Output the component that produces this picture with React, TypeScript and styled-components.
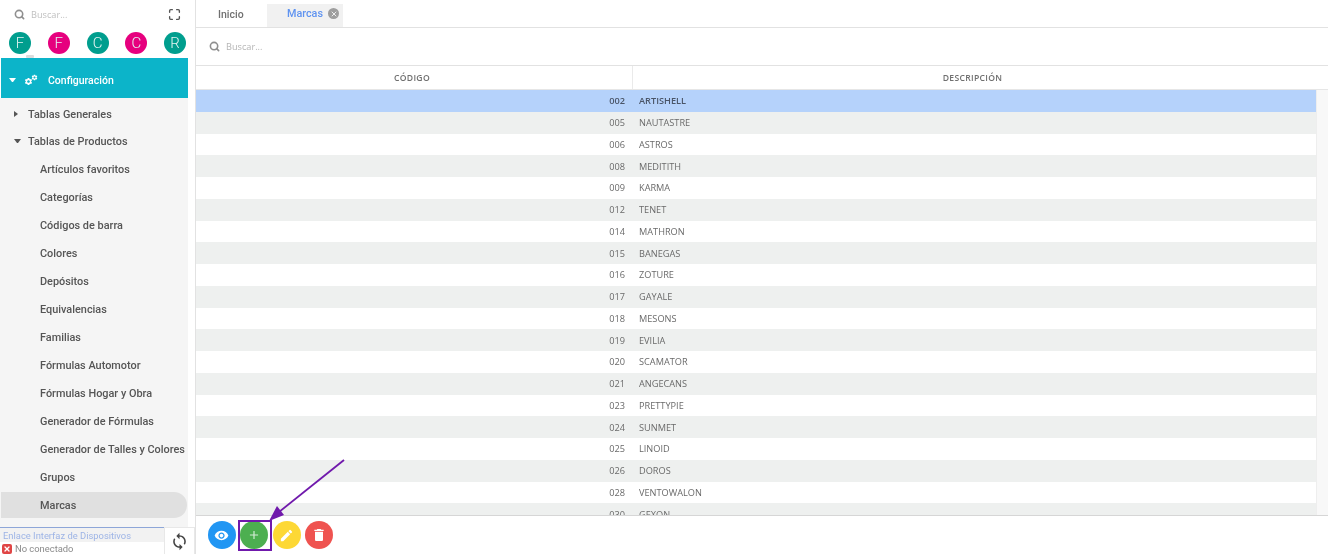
import React from 'react';
import styled, { createGlobalStyle } from 'styled-components';
import { Search, Maximize, X } from 'lucide-react';
import { MdVisibility, MdAdd, MdEdit, MdDelete, MdSync, MdSettings } from 'react-icons/md';

const GlobalStyle = createGlobalStyle`
  html, body { margin: 0; padding: 0; background: #fff; overflow: hidden; }
  * { box-sizing: border-box; }
`;

const avatars = [
  { letter: 'F', color: '#009e8e' },
  { letter: 'F', color: '#e6007e' },
  { letter: 'C', color: '#009e8e' },
  { letter: 'C', color: '#e6007e' },
  { letter: 'R', color: '#009e8e' },
];

const menuItems = [
  'Artículos favoritos',
  'Categorías',
  'Códigos de barra',
  'Colores',
  'Depósitos',
  'Equivalencias',
  'Familias',
  'Fórmulas Automotor',
  'Fórmulas Hogar y Obra',
  'Generador de Fórmulas',
  'Generador de Talles y Colores',
  'Grupos',
  'Marcas',
];

const brands = [
  ['002', 'ARTISHELL'],
  ['005', 'NAUTASTRE'],
  ['006', 'ASTROS'],
  ['008', 'MEDITITH'],
  ['009', 'KARMA'],
  ['012', 'TENET'],
  ['014', 'MATHRON'],
  ['015', 'BANEGAS'],
  ['016', 'ZOTURE'],
  ['017', 'GAYALE'],
  ['018', 'MESONS'],
  ['019', 'EVILIA'],
  ['020', 'SCAMATOR'],
  ['021', 'ANGECANS'],
  ['023', 'PRETTYPIE'],
  ['024', 'SUNMET'],
  ['025', 'LINOID'],
  ['026', 'DOROS'],
  ['028', 'VENTOWALON'],
  ['030', 'GEXON'],
];

const Page = styled.div`
  position: relative;
  width: 1337px;
  height: 554px;
  display: flex;
  overflow: hidden;
  background: #fff;
  font-family: Roboto, sans-serif;
  filter: blur(0.5px);
`;

const Sidebar = styled.aside`
  width: 196px;
  height: 554px;
  flex-shrink: 0;
  display: flex;
  flex-direction: column;
  border-right: 1px solid #e2e2e2;
  background: #fff;
`;

const SideSearch = styled.div`
  height: 29px;
  display: flex;
  align-items: center;
  padding: 0 14px 0 14px;
  gap: 6px;
  color: #8f8f8f;
`;

const SideSearchText = styled.span`
  flex: 1;
  color: #c0c0c0;
  font-family: 'Open Sans', sans-serif;
  font-size: 9.2px;
`;

const Avatars = styled.div`
  height: 28px;
  display: flex;
  justify-content: space-between;
  align-items: center;
  padding: 0 9px 0 9px;
`;

const Avatar = styled.div<{ $color: string }>`
  width: 22px;
  height: 22px;
  border-radius: 50%;
  background: ${(p) => p.$color};
  color: #e4f4f2;
  font-size: 15px;
  font-weight: 300;
  display: flex;
  align-items: center;
  justify-content: center;
`;

const ClippedIcon = styled.div`
  position: absolute;
  left: 26px;
  top: 55px;
  width: 8px;
  height: 3px;
  border-radius: 1px;
  background: #dcdcdc;
`;

const ActiveSection = styled.div`
  height: 40px;
  margin: 1px 7px 0 1px;
  padding: 4px 0 0 8px;
  background: #0cb4c9;
  color: #fff;
  display: flex;
  align-items: center;
  font-size: 10.5px;
  font-weight: 500;
`;

const Caret = styled.span<{ $open?: boolean; $dark?: boolean }>`
  width: 7px;
  height: 0;
  flex-shrink: 0;
  ${(p) =>
    p.$open
      ? `border-left: 3.5px solid transparent; border-right: 3.5px solid transparent; border-top: 4px solid ${p.$dark ? '#555' : '#fff'};`
      : `border-top: 3.5px solid transparent; border-bottom: 3.5px solid transparent; border-left: 4px solid ${p.$dark ? '#555' : '#fff'}; border-right: 3px solid transparent;`}
`;

const Gears = styled.span`
  width: 12px;
  height: 12px;
  margin: 0 12px 0 8px;
  display: flex;
  align-items: flex-start;
`;

const BigGear = styled(MdSettings)`
  width: 9px;
  height: 9px;
  margin-top: 3px;
  flex-shrink: 0;
`;

const SmallGear = styled(MdSettings)`
  width: 7px;
  height: 7px;
  margin-left: -2px;
  flex-shrink: 0;
`;

const Menu = styled.div`
  flex: 1;
  min-height: 0;
  margin-right: 7px;
  padding-top: 2.5px;
  background: #f5f5f5;
  overflow: hidden;
  display: flex;
  flex-direction: column;
`;

const GroupRow = styled.div`
  height: 27.25px;
  flex-shrink: 0;
  display: flex;
  align-items: center;
  gap: 7px;
  padding-left: 14px;
  color: #555;
  font-size: 10.9px;
  font-weight: 500;
`;

const MenuItem = styled.div<{ $active?: boolean }>`
  height: 26px;
  margin: 1px 1px 1px 1px;
  flex-shrink: 0;
  display: flex;
  align-items: center;
  padding-left: 39px;
  color: #555;
  font-size: 10.9px;
  font-weight: 500;
  white-space: nowrap;
  border-radius: 0 13px 13px 0;
  background: ${(p) => (p.$active ? '#e0e0e0' : 'transparent')};
`;

const Status = styled.div`
  height: 27px;
  flex-shrink: 0;
  display: flex;
  background: #fff;
`;

const StatusInfo = styled.div`
  flex: 1;
  min-width: 0;
  font-size: 9.4px;
  white-space: nowrap;
  overflow: hidden;
`;

const StatusTitle = styled.div`
  height: 15px;
  padding-left: 3px;
  display: flex;
  align-items: center;
  color: #9db4e6;
  background: #f2f2f2;
  border-top: 1px solid #8da6d8;
`;

const StatusLine = styled.div`
  display: flex;
  align-items: center;
  gap: 3px;
  padding: 1px 0 0 2px;
  color: #8a8a8a;
`;

const ErrorMark = styled.span`
  width: 10px;
  height: 10px;
  border-radius: 2px;
  background: #e04545;
  color: #fff;
  display: flex;
  align-items: center;
  justify-content: center;
`;

const RefreshButton = styled.div`
  width: 31px;
  height: 27px;
  display: flex;
  align-items: center;
  justify-content: center;
  border: 1px solid #e8e8e8;
  border-bottom: none;
  color: #444;
`;

const Main = styled.main`
  width: 1132px;
  flex-shrink: 0;
  display: flex;
  flex-direction: column;
`;

const Tabs = styled.div`
  height: 28px;
  display: flex;
  border-bottom: 1px solid #e2e2e2;
`;

const InactiveTab = styled.div`
  width: 71px;
  padding: 8px 0 0 22px;
  color: #707070;
  font-size: 10.5px;
  font-weight: 500;
`;

const ActiveTab = styled.div`
  width: 76px;
  height: 23px;
  margin-top: 4px;
  padding: 3px 0 0 20px;
  display: flex;
  gap: 5px;
  color: #5f93f0;
  background: #f1f1f1;
  font-size: 10.8px;
  font-weight: 500;
`;

const TabClose = styled.span`
  width: 11px;
  height: 11px;
  margin-top: 1px;
  border-radius: 50%;
  background: #9e9e9e;
  color: #eee;
  display: flex;
  align-items: center;
  justify-content: center;
`;

const SearchBar = styled.div`
  height: 38px;
  display: flex;
  align-items: center;
  gap: 6px;
  padding-left: 13px;
  border-bottom: 1px solid #e2e2e2;
  color: #8f8f8f;
`;

const SearchHint = styled.span`
  color: #b5b5b5;
  font-family: 'Open Sans', sans-serif;
  font-size: 9.2px;
`;

const TableHead = styled.div`
  height: 24px;
  display: grid;
  grid-template-columns: 436px 1fr;
  border-bottom: 1px solid #e6e6e6;
  color: #6f6f6f;
  font-family: 'Open Sans', sans-serif;
  font-size: 8.6px;
  font-weight: 600;
  letter-spacing: 0.3px;
`;

const HeadCell = styled.div<{ $trail: number }>`
  display: flex;
  align-items: center;
  justify-content: center;
  padding-right: ${(p) => p.$trail}px;
  & + & { border-left: 1px solid #eaeaea; }
`;

const TableBody = styled.div`
  height: 425px;
  display: flex;
  overflow: hidden;
`;

const Rows = styled.div`
  width: 1120px;
  flex-shrink: 0;
`;

const ScrollTrack = styled.div`
  width: 12px;
  background: #f8f8f8;
  border-left: 1px solid #eeeeee;
`;

const Row = styled.div<{ $selected: boolean; $odd: boolean }>`
  height: 21.75px;
  display: grid;
  grid-template-columns: 429px 1fr;
  column-gap: 14px;
  align-items: center;
  font-family: 'Open Sans', sans-serif;
  font-size: 9.2px;
  color: ${(p) => (p.$selected ? '#4a5568' : '#6a6a6a')};
  font-weight: ${(p) => (p.$selected ? 600 : 400)};
  background: ${(p) => (p.$selected ? '#b5d2fb' : p.$odd ? '#eef0ef' : '#fff')};
`;

const CodeCell = styled.span`
  text-align: right;
`;

const Actions = styled.div`
  flex: 1;
  display: flex;
  align-items: center;
  gap: 4.6px;
  padding-left: 11.5px;
  border-top: 1px solid #d6d6d6;
`;

const ActionButton = styled.div<{ $color: string }>`
  width: 28px;
  height: 28px;
  border-radius: 50%;
  background: ${(p) => p.$color};
  color: #fff;
  display: flex;
  align-items: center;
  justify-content: center;
`;

const Highlight = styled.div`
  position: absolute;
  left: 238px;
  top: 520px;
  width: 34px;
  height: 31px;
  border: 2px solid #7019ac;
`;

const Arrow = styled.svg`
  position: absolute;
  left: 260px;
  top: 450px;
  width: 95px;
  height: 80px;
`;

export default function App() {
  return (
    <Page>
      <GlobalStyle />
      <Sidebar>
        <SideSearch>
          <Search size={11} strokeWidth={3.5} />
          <SideSearchText>Buscar...</SideSearchText>
          <Maximize size={13} color="#555" strokeWidth={2.5} />
        </SideSearch>
        <Avatars>
          {avatars.map((a, i) => (
            <Avatar key={i} $color={a.color}>{a.letter}</Avatar>
          ))}
        </Avatars>
        <ClippedIcon />
        <ActiveSection>
          <Caret $open />
          <Gears>
            <BigGear />
            <SmallGear />
          </Gears>
          Configuración
        </ActiveSection>
        <Menu>
          <GroupRow><Caret $dark />Tablas Generales</GroupRow>
          <GroupRow><Caret $open $dark />Tablas de Productos</GroupRow>
          {menuItems.map((item) => (
            <MenuItem key={item} $active={item === 'Marcas'}>{item}</MenuItem>
          ))}
        </Menu>
        <Status>
          <StatusInfo>
            <StatusTitle>Enlace Interfaz de Dispositivos</StatusTitle>
            <StatusLine>
              <ErrorMark><X size={8} strokeWidth={4} /></ErrorMark>
              No conectado
            </StatusLine>
          </StatusInfo>
          <RefreshButton><MdSync size={19} /></RefreshButton>
        </Status>
      </Sidebar>
      <Main>
        <Tabs>
          <InactiveTab>Inicio</InactiveTab>
          <ActiveTab>
            Marcas
            <TabClose><X size={8} strokeWidth={3} /></TabClose>
          </ActiveTab>
        </Tabs>
        <SearchBar>
          <Search size={11} strokeWidth={3.5} />
          <SearchHint>Buscar...</SearchHint>
        </SearchBar>
        <TableHead>
          <HeadCell $trail={4}>CÓDIGO</HeadCell>
          <HeadCell $trail={16}>DESCRIPCIÓN</HeadCell>
        </TableHead>
        <TableBody>
          <Rows>
            {brands.map(([code, name], i) => (
              <Row key={code} $selected={i === 0} $odd={i % 2 === 1}>
                <CodeCell>{code}</CodeCell>
                <span>{name}</span>
              </Row>
            ))}
          </Rows>
          <ScrollTrack />
        </TableBody>
        <Actions>
          <ActionButton $color="#2196f3"><MdVisibility size={15} /></ActionButton>
          <ActionButton $color="#4caf50"><MdAdd size={14} color="#d5ecd6" /></ActionButton>
          <ActionButton $color="#fdd835"><MdEdit size={15} /></ActionButton>
          <ActionButton $color="#ef5350"><MdDelete size={16} /></ActionButton>
        </Actions>
      </Main>
      <Highlight />
      <Arrow viewBox="0 0 95 80" fill="none">
        <line x1="84" y1="10" x2="14" y2="66" stroke="#7019ac" strokeWidth="1.8" />
        <polygon points="9,71 24,65 17,56" fill="#7019ac" />
      </Arrow>
    </Page>
  );
}
